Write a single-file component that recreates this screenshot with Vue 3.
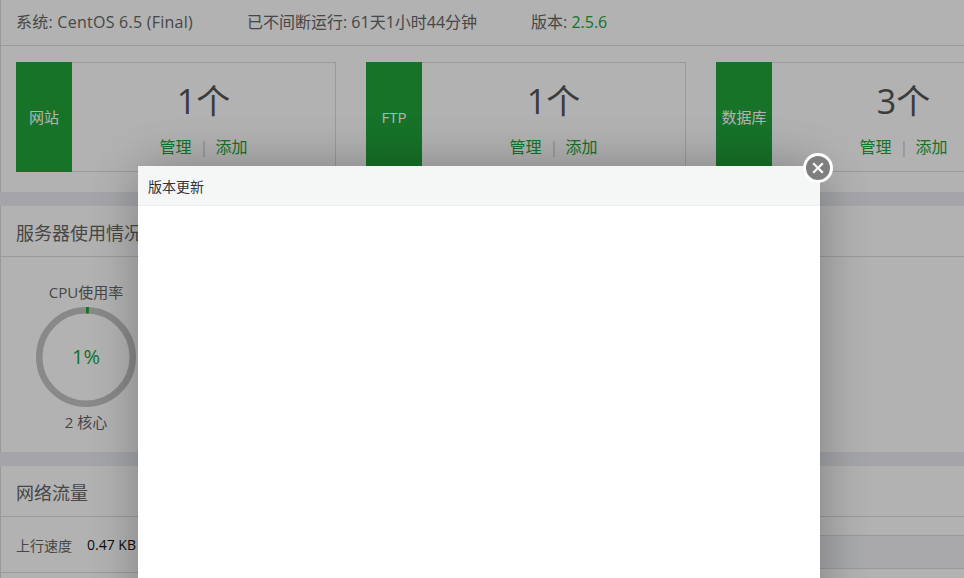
<template>
  <div class="page">
    <section class="panel">
      <div class="sys">
        <span class="sys__item sys__item--os">系统: CentOS 6.5 (Final)</span>
        <span class="sys__item sys__item--up">已不间断运行: 61天1小时44分钟</span>
        <span class="sys__item">版本: <a href="#" class="green">2.5.6</a></span>
      </div>
      <div class="cards">
        <div v-for="card in cards" :key="card.name" class="card">
          <div class="card__tile">{{ card.name }}</div>
          <div class="card__body">
            <div class="card__count">{{ card.count }}个</div>
            <div class="card__links">
              <a href="#" class="green">管理</a>
              <span class="card__sep">|</span>
              <a href="#" class="green">添加</a>
            </div>
          </div>
        </div>
      </div>
    </section>

    <section class="panel">
      <h3 class="panel__title">服务器使用情况</h3>
      <div class="usage">
        <div class="gauge">
          <div class="gauge__label">CPU使用率</div>
          <div class="gauge__ring">
            <svg width="100" height="100" viewBox="0 0 100 100">
              <circle cx="50" cy="50" r="46.75" fill="none" stroke="#c4c4c4" stroke-width="6.5" />
              <circle
                cx="50"
                cy="50"
                r="46.75"
                fill="none"
                stroke="#20a53a"
                stroke-width="6.5"
                :stroke-dasharray="`${cpuDash} 400`"
                transform="rotate(-90 50 50)"
              />
            </svg>
            <span class="gauge__value">1%</span>
          </div>
          <div class="gauge__label gauge__label--foot">2 核心</div>
        </div>
      </div>
    </section>

    <section class="panel panel--last">
      <h3 class="panel__title">网络流量</h3>
      <div class="net">
        <div class="net__side">
          <div class="net__row">
            <span class="net__key">上行速度</span>
            <span class="net__val">0.47 KB</span>
          </div>
        </div>
        <div class="net__chart">
          <div class="net__band"></div>
        </div>
      </div>
    </section>
  </div>

  <div class="shade"></div>
  <div class="dialog">
    <div class="dialog__title">版本更新</div>
    <a href="#" class="dialog__close" aria-label="关闭">
      <svg width="12" height="12" viewBox="0 0 12 12">
        <path d="M1.2 1.2 10.8 10.8M10.8 1.2 1.2 10.8" stroke="#fff" stroke-width="2.2" fill="none" />
      </svg>
    </a>
  </div>
</template>

<script setup>
const cards = [
  { name: '网站', count: 1 },
  { name: 'FTP', count: 1 },
  { name: '数据库', count: 3 }
]

const cpuDash = (2 * Math.PI * 46.75 * 0.01).toFixed(2)
</script>

<style>
html,
body {
  height: 100%;
  overflow: hidden;
  background: #ecedf2;
}
</style>

<style scoped>
.page {
  width: 964px;
  height: 578px;
  overflow: hidden;
  display: flex;
  flex-direction: column;
  gap: 14px;
  font-family: "Open Sans", "Noto Sans CJK SC", sans-serif;
  color: #666;
}

a {
  text-decoration: none;
}

.green {
  color: #20a53a;
}

.panel {
  background: #fff;
  border-left: 1px solid #ddd;
  flex: none;
}

.panel--last {
  flex: 1;
}

.sys {
  height: 46px;
  box-sizing: border-box;
  border-bottom: 1px solid #ddd;
  padding: 0 0 3px 15px;
  display: flex;
  align-items: center;
  font-size: 16px;
  white-space: nowrap;
}

.sys__item--os {
  width: 231px;
  letter-spacing: 0.25px;
}

.sys__item--up {
  width: 284px;
}

.cards {
  display: flex;
  gap: 30px;
  padding: 16px 0 20px 15px;
}

.card {
  flex: none;
  width: 320px;
  height: 110px;
  box-sizing: border-box;
  display: flex;
  border: 1px solid #ddd;
  border-left: 0;
}

.card__tile {
  width: 56px;
  margin: -1px 0;
  padding-bottom: 1px;
  box-sizing: border-box;
  background: #20a53a;
  color: #fff;
  font-size: 15px;
  display: flex;
  align-items: center;
  justify-content: center;
}

.card__body {
  flex: 1;
  text-align: center;
}

.card__count {
  margin-top: 14px;
  font-size: 34px;
  line-height: 48px;
  color: #555;
}

.card__links {
  margin-top: 10px;
  font-size: 16px;
  line-height: 24px;
  display: flex;
  justify-content: center;
  gap: 8px;
}

.card__sep {
  width: 8px;
  text-align: center;
  color: #ccc;
}

.panel__title {
  margin: 0;
  height: 51px;
  box-sizing: border-box;
  border-bottom: 1px solid #ddd;
  padding: 2px 0 0 15px;
  font-size: 18px;
  font-weight: 400;
  line-height: 50px;
  color: #666;
}

.usage {
  height: 195px;
  padding: 25px 0 0 35px;
  box-sizing: border-box;
}

.gauge {
  width: 100px;
  text-align: center;
  font-size: 15px;
}

.gauge__label {
  line-height: 20px;
  white-space: nowrap;
  margin: 0 -10px 5px;
}

.gauge__label--foot {
  margin-top: 5px;
  margin-bottom: 0;
}

.gauge__ring {
  position: relative;
  height: 100px;
}

.gauge__ring svg {
  display: block;
}

.gauge__value {
  position: absolute;
  inset: 0;
  padding-bottom: 2px;
  display: flex;
  align-items: center;
  justify-content: center;
  font-size: 20px;
  color: #20a53a;
}

.net {
  display: grid;
  grid-template-columns: 500px 1fr;
}

.net__row {
  height: 56px;
  box-sizing: border-box;
  border-bottom: 1px solid #ddd;
  padding-left: 15px;
  display: flex;
  align-items: center;
  font-size: 14px;
}

.net__key {
  width: 71px;
}

.net__val {
  color: #111;
}

.net__chart {
  padding-top: 18px;
}

.net__band {
  height: 34px;
  box-sizing: border-box;
  background: #f2f3f7;
  border-top: 1px solid #ddd;
  border-bottom: 1px solid #ddd;
}

.shade {
  position: fixed;
  inset: 0;
  background: rgba(0, 0, 0, 0.3);
}

.dialog {
  position: fixed;
  left: 138px;
  top: 166px;
  width: 682px;
  height: 500px;
  background: #fff;
  box-shadow: 1px 1px 50px rgba(0, 0, 0, 0.3);
  font-family: "Open Sans", "Noto Sans CJK SC", sans-serif;
}

.dialog__title {
  height: 40px;
  box-sizing: border-box;
  border-bottom: 1px solid #eee;
  background: #f5f7f7;
  padding-left: 10px;
  font-size: 14px;
  line-height: 42px;
  color: #333;
}

.dialog__close {
  position: absolute;
  right: -13px;
  top: -13px;
  width: 30px;
  height: 30px;
  box-sizing: border-box;
  border-radius: 50%;
  border: 3px solid #fff;
  background: #7f7f7f;
  display: flex;
  align-items: center;
  justify-content: center;
}
</style>
